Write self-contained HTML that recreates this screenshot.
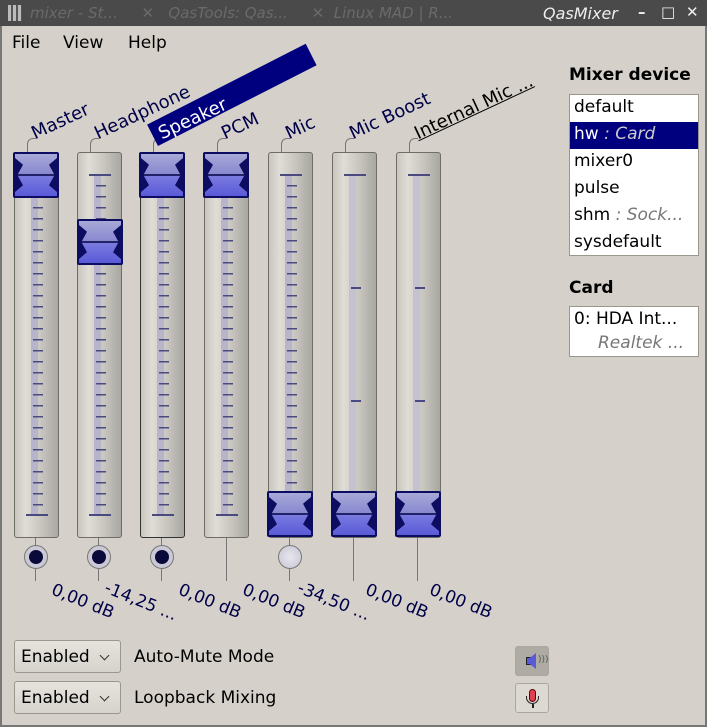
<!DOCTYPE html>
<html><head><meta charset="utf-8"><style>
*{box-sizing:border-box;margin:0;padding:0}
body{width:707px;height:727px;background:#d5d1ca;font-family:"DejaVu Sans","Liberation Sans",sans-serif;position:relative;overflow:hidden;color:#000}
.tb{position:absolute;left:0;top:0;width:707px;height:26px;background:#4a4a4a}
.tb .t{position:absolute;left:30px;top:4px;color:#6a6a6a;font-size:15px;font-style:italic}
.tb .n{position:absolute;left:543px;top:4px;color:#eee;font-size:16px;font-style:italic}
.tb .b{position:absolute;top:3px;color:#eee;font-size:15px;font-weight:bold}
.menu{position:absolute;top:33px;font-size:17px}
.tr{position:absolute;top:152px;width:45px;height:386px;border:1px solid #6f6e66;border-radius:3px;background:linear-gradient(90deg,#c9c6be,#e0ddd6 25%,#c9c6c0 60%,#a9a7a2)}
.sc{position:absolute;top:174px;width:22px;height:342px}
.sc .bar{position:absolute;left:5px;top:0;width:7px;height:342px;background:#b7b4cc}
.sc .tk{position:absolute;left:7px;top:0;width:10px;height:342px;background:repeating-linear-gradient(180deg,#4a4a80 0 1.5px,transparent 1.5px 11px)}
.sc .e{position:absolute;left:0;width:22px;height:2px;background:#4a4a80}
.h{position:absolute;width:46px;height:46px;border:2px solid #0c0c60;border-radius:2px;background:linear-gradient(180deg,#a8a8d8,#8888d0 48%,#222266 48%,#222266 52%,#7a7ae0 53%,#5a5ad8)}
.h:before,.h:after{content:"";position:absolute;top:4px;width:8px;height:34px;background:#0c0c60;clip-path:polygon(0 0,100% 20%,30% 50%,100% 80%,0 100%)}
.h:before{left:0}.h:after{right:0;transform:scaleX(-1)}
.lbl{position:absolute;font-size:18px;color:#000048;transform-origin:0 100%;transform:rotate(-25deg);white-space:nowrap}
.stem{position:absolute;width:1px;background:#777}
.hook{position:absolute;top:138px;width:9px;height:15px;border-left:1px solid #777;border-top:1px solid #777;border-top-left-radius:6px}
.led{position:absolute;top:545px;width:24px;height:24px;border-radius:50%;border:1px solid #777;background:#ccc9d6}
.led i{position:absolute;left:4px;top:4px;width:14px;height:14px;border-radius:50%;background:#0a0a3a}
.db{position:absolute;font-size:17px;color:#000048;transform-origin:0 0;transform:rotate(22deg);white-space:nowrap}
.cmb{position:absolute;left:14px;width:107px;height:33px;border:1px solid #9a978f;border-radius:3px;background:linear-gradient(#e6e3dd,#d6d3cc);font-size:17px;padding:6px 0 0 6px}
.cmb:after{content:"";position:absolute;right:12px;top:11px;width:6px;height:6px;border-right:1.5px solid #333;border-bottom:1.5px solid #333;transform:rotate(45deg)}
.ml{position:absolute;left:134px;font-size:17px}
.ib{position:absolute;left:515px;width:34px;height:30px;border:1px solid #aaa79f;border-radius:3px}
.list{position:absolute;left:569px;background:#fff;border:1px solid #9a978f;font-size:17px}
.list div{height:27px;padding:2px 0 0 4px;white-space:nowrap}
.list i{color:#777}
</style></head><body>
<div class="tb"><div class="t">mixer - St...&nbsp;&nbsp;&nbsp;&nbsp;&nbsp;✕ &nbsp;&nbsp;QasTools: Qas...&nbsp;&nbsp;&nbsp;&nbsp;&nbsp;✕ &nbsp;Linux MAD | R...</div>
<div style="position:absolute;left:8px;top:5px;width:14px;height:16px;background:repeating-linear-gradient(90deg,#bbb 0 3px,#555 3px 5px)"></div>
<div class="n">QasMixer</div><div class="b" style="left:638px">–</div><div class="b" style="left:661px">□</div><div class="b" style="left:686px">✕</div></div>
<div class="menu" style="left:12px">File</div><div class="menu" style="left:63px">View</div><div class="menu" style="left:128px">Help</div>

<!-- labels -->
<div class="hook" style="left:27px"></div><div class="hook" style="left:90px"></div><div class="hook" style="left:153px"></div><div class="hook" style="left:217px"></div><div class="hook" style="left:281px"></div><div class="hook" style="left:345px"></div><div class="hook" style="left:409px"></div>
<div class="lbl" style="left:37px;top:123px">Master</div>
<div class="lbl" style="left:100px;top:123px">Headphone</div>
<div style="position:absolute;left:158px;top:122px;width:178px;height:24px;background:#00007e;transform-origin:0 100%;transform:rotate(-27deg)"></div>
<div class="lbl" style="left:164px;top:123px;color:#fff">Speaker</div>
<div class="lbl" style="left:227px;top:123px">PCM</div>
<div class="lbl" style="left:291px;top:123px">Mic</div>
<div class="lbl" style="left:355px;top:123px">Mic Boost</div>
<div class="lbl" style="left:420px;top:123px;text-decoration:underline;color:#000">Internal Mic ...</div>

<!-- tracks -->
<div class="tr" style="left:14px"></div><div class="tr" style="left:77px"></div><div class="tr" style="left:140px;border-color:#333"></div><div class="tr" style="left:204px"></div><div class="tr" style="left:268px"></div><div class="tr" style="left:332px"></div><div class="tr" style="left:396px"></div>

<div class="sc" style="left:26px"><div class="bar"></div><div class="tk"></div><div class="e" style="top:0"></div><div class="e" style="top:340px"></div></div>
<div class="sc" style="left:89px"><div class="bar"></div><div class="tk"></div><div class="e" style="top:0"></div><div class="e" style="top:340px"></div></div>
<div class="sc" style="left:152px"><div class="bar"></div><div class="tk"></div><div class="e" style="top:0"></div><div class="e" style="top:340px"></div></div>
<div class="sc" style="left:216px"><div class="bar"></div><div class="tk"></div><div class="e" style="top:0"></div><div class="e" style="top:340px"></div></div>
<div class="sc" style="left:280px"><div class="bar"></div><div class="tk"></div><div class="e" style="top:0"></div></div>
<div class="sc" style="left:344px"><div class="bar" style="background:#c4c2cf"></div><div class="e" style="top:0"></div><div class="e" style="top:113px;left:7px;width:10px"></div><div class="e" style="top:226px;left:7px;width:10px"></div></div>
<div class="sc" style="left:408px"><div class="bar" style="background:#c4c2cf"></div><div class="e" style="top:0"></div><div class="e" style="top:113px;left:7px;width:10px"></div><div class="e" style="top:226px;left:7px;width:10px"></div></div>

<div class="h" style="left:13px;top:152px"></div>
<div class="h" style="left:77px;top:219px"></div>
<div class="h" style="left:139px;top:152px"></div>
<div class="h" style="left:203px;top:152px"></div>
<div class="h" style="left:267px;top:491px"></div>
<div class="h" style="left:331px;top:491px"></div>
<div class="h" style="left:395px;top:491px"></div>

<!-- stems -->
<div class="stem" style="left:35px;top:538px;height:43px"></div>
<div class="stem" style="left:98px;top:538px;height:43px"></div>
<div class="stem" style="left:161px;top:538px;height:43px"></div>
<div class="stem" style="left:226px;top:538px;height:43px"></div>
<div class="stem" style="left:289px;top:538px;height:43px"></div>
<div class="stem" style="left:353px;top:538px;height:43px"></div>
<div class="stem" style="left:417px;top:538px;height:43px"></div>
<div class="led" style="left:24px"><i></i></div>
<div class="led" style="left:87px"><i></i></div>
<div class="led" style="left:150px"><i></i></div>
<div class="led" style="left:278px;background:radial-gradient(#e8e6ee,#c6c4d2)"></div>

<div class="db" style="left:56px;top:580px">0,00 dB</div>
<div class="db" style="left:109px;top:578px">-14,25 ...</div>
<div class="db" style="left:183px;top:580px">0,00 dB</div>
<div class="db" style="left:247px;top:580px">0,00 dB</div>
<div class="db" style="left:302px;top:578px">-34,50 ...</div>
<div class="db" style="left:370px;top:580px">0,00 dB</div>
<div class="db" style="left:434px;top:580px">0,00 dB</div>

<div class="cmb" style="top:640px">Enabled</div><div class="ml" style="top:647px">Auto-Mute Mode</div>
<div class="cmb" style="top:681px">Enabled</div><div class="ml" style="top:688px">Loopback Mixing</div>
<div class="ib" style="top:646px;background:#aeaba4"><div style="position:absolute;left:10px;top:10px;width:5px;height:8px;background:#5a5ad8;border:1px solid #222"></div><div style="position:absolute;left:14px;top:6px;width:6px;height:16px;background:#5a5ad8;clip-path:polygon(0 30%,100% 0,100% 100%,0 70%)"></div><div style="position:absolute;left:22px;top:8px;font-size:9px;color:#555">)))</div></div>
<div class="ib" style="top:683px;background:#dcd9d3"><div style="position:absolute;left:13px;top:5px;width:7px;height:13px;border-radius:4px;background:#e04050;border:1px solid #600"></div><div style="position:absolute;left:10px;top:12px;width:13px;height:8px;border:1.5px solid #222;border-top:none;border-radius:0 0 7px 7px"></div><div style="position:absolute;left:16px;top:20px;width:1.5px;height:4px;background:#222"></div></div>

<div style="position:absolute;left:569px;top:65px;font-size:17px;font-weight:bold">Mixer device</div>
<div class="list" style="top:94px;width:130px;height:162px">
<div>default</div><div style="background:#00007e;color:#fff">hw <i style="color:#ccc">: Card</i></div><div>mixer0</div><div>pulse</div><div>shm <i>: Sock...</i></div><div>sysdefault</div></div>
<div style="position:absolute;left:569px;top:278px;font-size:17px;font-weight:bold">Card</div>
<div class="list" style="top:306px;width:130px;height:51px"><div style="height:24px">0: HDA Int...</div><div style="padding-left:28px"><i>Realtek ...</i></div></div>
<div style="position:absolute;left:0;top:26px;width:2px;height:701px;background:#777"></div>
<div style="position:absolute;right:0;top:26px;width:2px;height:701px;background:#777"></div>
<div style="position:absolute;left:0;bottom:0;width:707px;height:2px;background:#777"></div>
</body></html>
